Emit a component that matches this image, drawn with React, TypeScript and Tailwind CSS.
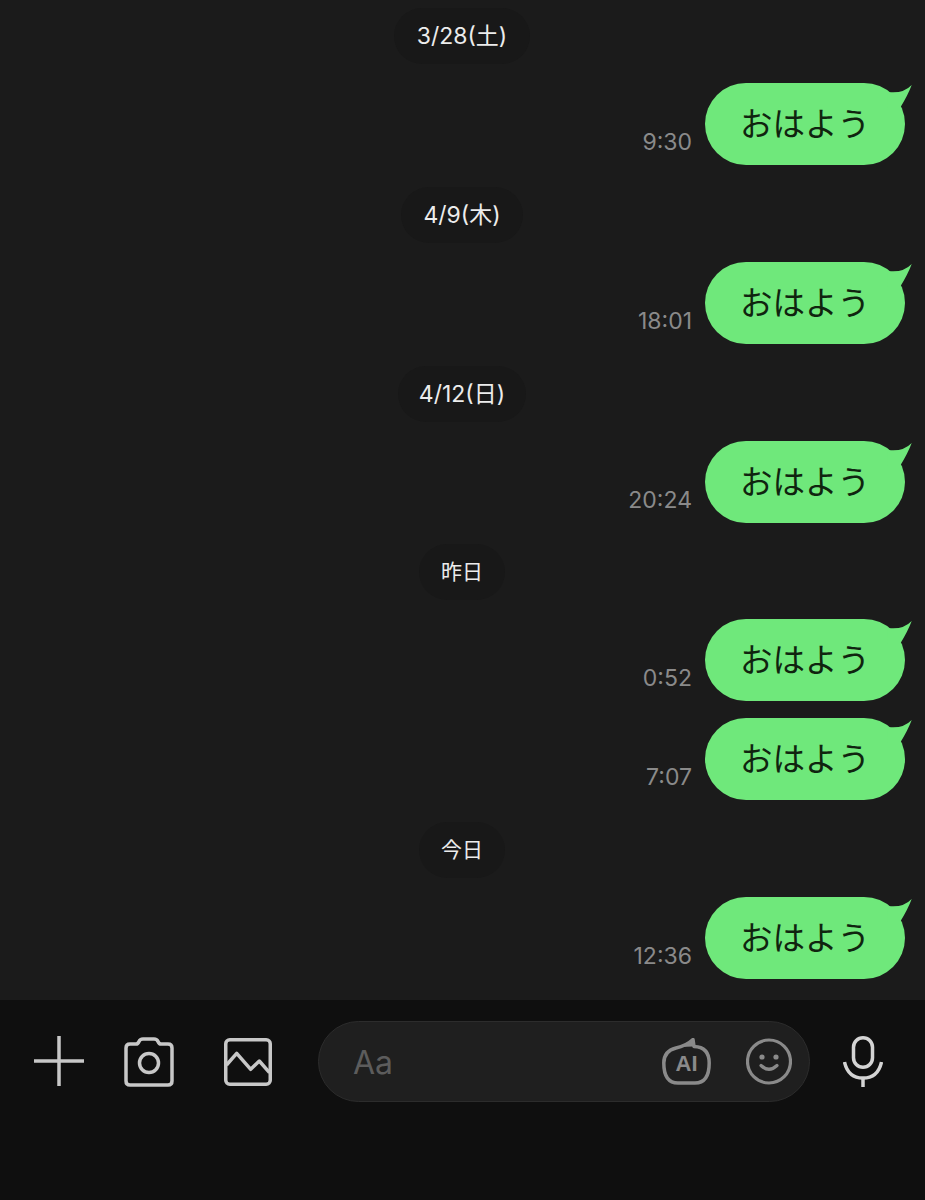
const UI_FONT = 'font-["Inter","Noto_Sans_CJK_JP",sans-serif]';

function DatePill({ label, className = 'px-[22.5px] text-[23px]' }: { label: string; className?: string }) {
  return (
    <div className="flex justify-center pr-[1px]">
      <div className={`flex h-14 items-center rounded-full bg-[#181818] text-[#ececec] ${UI_FONT} ${className}`}>
        {label}
      </div>
    </div>
  );
}

function Message({ time }: { time: string }) {
  return (
    <div className="flex items-end justify-end gap-[13px] pr-5">
      <span className='mb-[10px] font-["Inter",sans-serif] text-[23px] leading-[26px] text-[#8a8a8a]'>{time}</span>
      <div className="relative flex h-[82px] w-[200px] items-center justify-center rounded-full bg-[#6fe87b] pb-[3px]">
        <span className='font-["Noto_Sans_CJK_JP",sans-serif] text-[32.5px] leading-none text-[#10240f]'>おはよう</span>
        <svg className="absolute -right-[7px] top-0" width="30" height="30" viewBox="0 0 30 30">
          <path d="M6 9Q21 11 29.7 2Q26 12 18 25L5 25Z" fill="#6fe87b" />
        </svg>
      </div>
    </div>
  );
}

function PlusIcon() {
  return (
    <svg width="50" height="50" viewBox="0 0 50 50" fill="none" stroke="#c8c8c8" strokeWidth="3.5">
      <path d="M25 0V50M0 25H50" />
    </svg>
  );
}

function CameraIcon() {
  return (
    <svg width="50" height="50" viewBox="0 0 50 50" fill="none" stroke="#c8c8c8" strokeWidth="3.5" strokeLinejoin="round">
      <path d="M6 7H12Q14 7 15 4.5Q16 2 19 2H30Q33 2 34 4.5Q35 7 37 7H44Q48 7 48 11V44Q48 48 44 48H6Q2 48 2 44V11Q2 7 6 7Z" />
      <circle cx="25" cy="26" r="9.5" />
    </svg>
  );
}

function ImageIcon() {
  return (
    <svg width="48" height="48" viewBox="0 0 48 48" fill="none" stroke="#c8c8c8" strokeWidth="3.5" strokeLinejoin="round">
      <rect x="1.75" y="1.75" width="44.5" height="44.5" rx="4" />
      <path d="M2.5 27L12.7 15.3L26.7 31.3L35.3 23L45.5 34.7" />
    </svg>
  );
}

function AiIcon() {
  return (
    <div className="relative h-[47px] w-[49px]">
      <svg width="49" height="47" viewBox="0 0 49 47" fill="none" stroke="#8a8a8a" strokeWidth="3.5" strokeLinejoin="round">
        <path d="M32 8.5Q47.2 9 47.2 25Q47.2 45 33 45H16Q1.8 45 1.8 25Q1.8 13 14 10Q24 8 31 1.5Z" />
        <path d="M18 9L31 2V8.5Z" fill="#8a8a8a" stroke="none" />
      </svg>
      <span className='absolute inset-x-0 top-[14px] text-center font-["Liberation_Sans",sans-serif] text-[22px] font-bold leading-[24px] text-[#8a8a8a]'>AI</span>
    </div>
  );
}

function SmileIcon() {
  return (
    <svg width="46" height="47" viewBox="0 0 46 47" fill="none" stroke="#8a8a8a" strokeWidth="3.2" strokeLinecap="round">
      <circle cx="23" cy="23.5" r="21.5" />
      <circle cx="16" cy="19" r="2.6" fill="#8a8a8a" stroke="none" />
      <circle cx="30" cy="19" r="2.6" fill="#8a8a8a" stroke="none" />
      <path d="M15 27.5Q23 35 31 27.5" />
    </svg>
  );
}

function MicIcon() {
  return (
    <svg width="40" height="51" viewBox="0 0 40 51" fill="none" stroke="#d4d4d4" strokeWidth="3.5">
      <rect x="10.5" y="1.75" width="19" height="29.5" rx="9.5" />
      <path d="M1.5 26Q5 42 20 42Q35 42 38.5 26" />
      <path d="M20 42V51" />
    </svg>
  );
}

export default function App() {
  return (
    <div className="flex h-[1200px] w-[925px] flex-col overflow-hidden bg-[#1b1b1b]">
      <div className="flex h-[1000px] flex-col pt-2">
        <DatePill label="3/28(土)" />
        <div className="mt-[19px]"><Message time="9:30" /></div>
        <div className="mt-[22px]"><DatePill label="4/9(木)" className="px-[22px] text-[23px]" /></div>
        <div className="mt-[19px]"><Message time="18:01" /></div>
        <div className="mt-[22px]"><DatePill label="4/12(日)" className="px-[21px] text-[23px]" /></div>
        <div className="mt-[19px]"><Message time="20:24" /></div>
        <div className="mt-[21px]"><DatePill label="昨日" className="px-[22px] text-[21px]" /></div>
        <div className="mt-[19px]"><Message time="0:52" /></div>
        <div className="mt-[17px]"><Message time="7:07" /></div>
        <div className="mt-[22px]"><DatePill label="今日" className="px-[22px] text-[21px]" /></div>
        <div className="mt-[19px]"><Message time="12:36" /></div>
      </div>
      <div className="flex h-[200px] items-start bg-[#0f0f0f] pl-[34px] pt-[21px]">
        <div className="mt-[15px]"><PlusIcon /></div>
        <div className="ml-10 mt-[16px]"><CameraIcon /></div>
        <div className="ml-[50px] mt-[17px]"><ImageIcon /></div>
        <div className="ml-[46px] flex h-[81px] w-[492px] items-center rounded-full border border-[#2c2c2c] bg-[#1f1f1f] pl-[34px] pr-[17px]">
          <span className='mt-[2px] font-["Inter",sans-serif] text-[32px] text-[#5c5c5c]'>Aa</span>
          <div className="ml-auto flex items-center gap-[35px]">
            <AiIcon />
            <SmileIcon />
          </div>
        </div>
        <div className="ml-[33px] mt-[15px]"><MicIcon /></div>
      </div>
    </div>
  );
}
